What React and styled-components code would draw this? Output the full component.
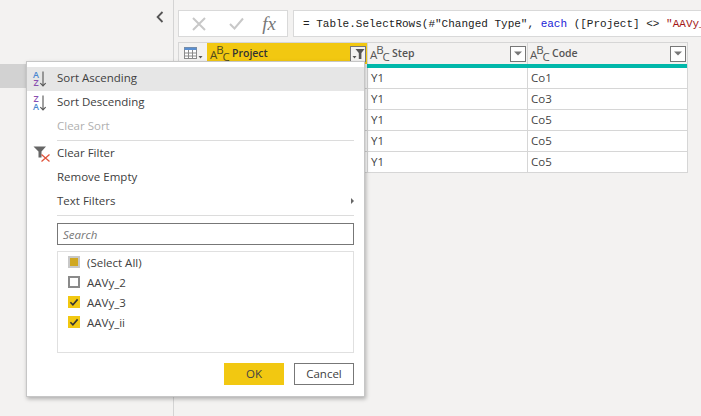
import styled, { createGlobalStyle } from "styled-components";

const GlobalStyle = createGlobalStyle`
  html, body {
    margin: 0;
    padding: 0;
    width: 701px;
    height: 416px;
    overflow: hidden;
    background: #f3f2f1;
    font-family: "Open Sans", "Liberation Sans", sans-serif;
  }
`;

const AbcIcon = ({ dark }) => (
  <AbcWrap $dark={dark}>
    <AbcLetter $drop={1}>A</AbcLetter>
    <AbcLetter $drop={-4}>B</AbcLetter>
    <AbcLetter $drop={3}>C</AbcLetter>
  </AbcWrap>
);

const ArrowDown = () => (
  <svg width="6" height="16" viewBox="0 0 6 16">
    <path d="M3 0.5V15M0.4 12L3 15L5.6 12" fill="none" stroke="#555" strokeWidth="1.1" />
  </svg>
);

const Check = () => (
  <svg width="12" height="12" viewBox="0 0 12 12">
    <path d="M2.4 6.2L4.9 8.8L9.6 3.4" fill="none" stroke="#333" strokeWidth="1.6" />
  </svg>
);

const App = () => {
  const rows = [
    ["Y1", "Co1"],
    ["Y1", "Co3"],
    ["Y1", "Co5"],
    ["Y1", "Co5"],
    ["Y1", "Co5"],
  ];

  return (
    <Page>
      <GlobalStyle />
      <SidePanel>
        <Collapse>
          <svg width="8" height="12" viewBox="0 0 8 12">
            <path d="M6.5 1L1.6 6L6.5 11" fill="none" stroke="#555" strokeWidth="1.8" />
          </svg>
        </Collapse>
        <SelectedQuery />
      </SidePanel>

      <Main>
        <FormulaRow>
          <FormulaTools>
            <svg width="14" height="14" viewBox="0 0 14 14">
              <path d="M1 1L13 13M13 1L1 13" stroke="#c8c8c8" strokeWidth="2" />
            </svg>
            <svg width="15" height="13" viewBox="0 0 15 13">
              <path d="M1 7L5.5 11.5L14 1.5" fill="none" stroke="#c8c8c8" strokeWidth="2" />
            </svg>
            <Fx>fx</Fx>
          </FormulaTools>
          <FormulaInput>
            = Table.SelectRows(#"Changed Type", <Keyword>each</Keyword> ([Project] &lt;&gt;{" "}
            <Str>"AAVy_</Str>
          </FormulaInput>
        </FormulaRow>

        <Table>
          <HeaderRow>
            <CornerCell>
              <svg width="19" height="13" viewBox="0 0 19 13">
                <rect x="0.5" y="0.5" width="12" height="11" fill="#fff" stroke="#8a8a8a" />
                <rect x="0.5" y="0.5" width="12" height="2.5" fill="#5b8fd0" />
                <path d="M4.5 3V11.5M8.5 3V11.5M0.5 6H12.5M0.5 9H12.5" stroke="#8a8a8a" strokeWidth="1" />
                <path d="M14.5 9H18.5L16.5 11.5Z" fill="#555" />
              </svg>
            </CornerCell>
            <HeaderCell $active>
              <AbcIcon dark />
              <HeaderLabel $active>Project</HeaderLabel>
              <FilterButton $active>
                <svg width="13" height="12" viewBox="0 0 13 12">
                  <path d="M3.5 1H12.5L9.4 5V11H6.8V5Z" fill="#555" />
                  <path d="M0.5 8H4.5L2.5 10.5Z" fill="#555" />
                </svg>
              </FilterButton>
            </HeaderCell>
            <HeaderCell>
              <AbcIcon />
              <HeaderLabel>Step</HeaderLabel>
              <FilterButton>
                <svg width="8" height="5" viewBox="0 0 8 5">
                  <path d="M0 0.5H8L4 4.5Z" fill="#777" />
                </svg>
              </FilterButton>
            </HeaderCell>
            <HeaderCell>
              <AbcIcon />
              <HeaderLabel>Code</HeaderLabel>
              <FilterButton>
                <svg width="8" height="5" viewBox="0 0 8 5">
                  <path d="M0 0.5H8L4 4.5Z" fill="#777" />
                </svg>
              </FilterButton>
            </HeaderCell>
          </HeaderRow>
          <QualityBar />
          {rows.map(([step, code], i) => (
            <DataRow key={i}>
              <DataCell />
              <DataCell />
              <DataCell>{step}</DataCell>
              <DataCell>{code}</DataCell>
            </DataRow>
          ))}
        </Table>
      </Main>

      <Menu>
        <MenuItem $hover>
          <MenuIcon>
            <SortLetters>
              <SortA>A</SortA>
              <SortZ>Z</SortZ>
            </SortLetters>
            <ArrowDown />
          </MenuIcon>
          Sort Ascending
        </MenuItem>
        <MenuItem>
          <MenuIcon>
            <SortLetters>
              <SortZ>Z</SortZ>
              <SortA>A</SortA>
            </SortLetters>
            <ArrowDown />
          </MenuIcon>
          Sort Descending
        </MenuItem>
        <MenuItem $disabled>
          <MenuIcon />
          Clear Sort
        </MenuItem>
        <Divider />
        <MenuItem>
          <MenuIcon>
            <svg width="18" height="16" viewBox="0 0 18 16">
              <path d="M0.5 0.5H13L8.5 5.5V11.5H5.5V5.5Z" fill="#666" />
              <path d="M8.5 8.5L16.5 15.5M16.5 8.5L8.5 15.5" stroke="#e0543c" strokeWidth="1.3" />
            </svg>
          </MenuIcon>
          Clear Filter
        </MenuItem>
        <MenuItem>
          <MenuIcon />
          Remove Empty
        </MenuItem>
        <MenuItem>
          <MenuIcon />
          Text Filters
          <Caret />
        </MenuItem>
        <Divider />
        <SearchBox>Search</SearchBox>
        <CheckList>
          <CheckRow>
            <CheckBox $state="mixed" />
            (Select All)
          </CheckRow>
          <CheckRow>
            <CheckBox $state="off" />
            AAVy_2
          </CheckRow>
          <CheckRow>
            <CheckBox $state="on">
              <Check />
            </CheckBox>
            AAVy_3
          </CheckRow>
          <CheckRow>
            <CheckBox $state="on">
              <Check />
            </CheckBox>
            AAVy_ii
          </CheckRow>
        </CheckList>
        <MenuButtons>
          <OkButton>OK</OkButton>
          <CancelButton>Cancel</CancelButton>
        </MenuButtons>
      </Menu>
    </Page>
  );
};

const Page = styled.div`
  position: relative;
  display: flex;
  width: 701px;
  height: 416px;
  overflow: hidden;
  background: #f3f2f1;
  color: #333;
  font-size: 11.5px;
`;

const SidePanel = styled.aside`
  width: 173px;
  height: 100%;
  flex: none;
  border-right: 1px solid #d4d4d4;
  box-sizing: content-box;
`;

const Collapse = styled.div`
  display: flex;
  justify-content: flex-end;
  height: 64px;
  padding: 11px 9px 0 0;
  box-sizing: border-box;
`;

const SelectedQuery = styled.div`
  height: 24px;
  background: #d2d2d2;
`;

const Main = styled.main`
  flex: 1;
  min-width: 0;
  padding: 10px 0 0 4px;
`;

const FormulaRow = styled.div`
  display: flex;
  gap: 5px;
  height: 27px;
  margin-bottom: 5px;
`;

const FormulaTools = styled.div`
  display: flex;
  align-items: center;
  justify-content: space-between;
  width: 110px;
  flex: none;
  box-sizing: border-box;
  padding: 0 11px 0 13px;
  background: #fff;
  border: 1px solid #d9d9d9;

  svg:nth-child(2) {
    margin-left: 5px;
  }
`;

const Fx = styled.span`
  font-family: "Liberation Serif", serif;
  font-style: italic;
  font-size: 19px;
  line-height: 22px;
  color: #777;
`;

const FormulaInput = styled.div`
  flex: 1;
  min-width: 0;
  box-sizing: border-box;
  padding: 0 0 0 9px;
  margin-right: -2px;
  background: #fff;
  border: 1px solid #d9d9d9;
  border-right: 0;
  font-family: "Liberation Mono", monospace;
  font-size: 11px;
  line-height: 27px;
  color: #222;
  white-space: pre;
  overflow: hidden;
`;

const Keyword = styled.span`
  color: #1a1ad6;
`;

const Str = styled.span`
  color: #a31515;
`;

const Table = styled.div`
  width: 510px;
  box-sizing: border-box;
  border: 1px solid #d6d6d6;
  border-bottom: 0;
`;

const HeaderRow = styled.div`
  display: grid;
  grid-template-columns: 28px 160px 160px 160px;
  height: 21px;
`;

const CornerCell = styled.div`
  display: flex;
  align-items: center;
  padding-left: 5px;
  background: #f3f2f1;
`;

const HeaderCell = styled.div`
  display: flex;
  align-items: center;
  padding: 0 1px 0 2px;
  background: ${({ $active }) => ($active ? "#f2c811" : "#f3f2f1")};
  border-left: 1px solid ${({ $active }) => ($active ? "#f2c811" : "#d6d6d6")};
`;

const AbcWrap = styled.span`
  display: flex;
  align-items: center;
  width: 20px;
  flex: none;
  color: ${({ $dark }) => ($dark ? "#4f4a1e" : "#555")};
`;

const AbcLetter = styled.span`
  font-size: 11.5px;
  line-height: 12px;
  width: 6.3px;
  transform: translateY(${({ $drop }) => $drop}px);
`;

const HeaderLabel = styled.span`
  flex: 1;
  margin-left: 2px;
  margin-top: -1px;
  font-size: 10.5px;
  font-weight: 600;
  color: ${({ $active }) => ($active ? "#333" : "#555")};
`;

const FilterButton = styled.span`
  display: flex;
  align-items: center;
  justify-content: center;
  width: 16px;
  height: 16px;
  flex: none;
  box-sizing: border-box;
  background: ${({ $active }) => ($active ? "#f3f2f1" : "#fff")};
  border: 1px solid #777;
`;

const QualityBar = styled.div`
  height: 4px;
  margin-left: 188px;
  background: #01b8aa;
`;

const DataRow = styled.div`
  display: grid;
  grid-template-columns: 28px 160px 160px 160px;
  height: 21px;
  background: #fff;
`;

const DataCell = styled.div`
  box-sizing: border-box;
  padding-left: 3px;
  border-left: 1px solid #d6d6d6;
  border-bottom: 1px solid #d6d6d6;
  font-size: 11.5px;
  line-height: 20px;
  color: #444;
`;

const Menu = styled.div`
  position: absolute;
  left: 26px;
  top: 61px;
  width: 339px;
  height: 336px;
  box-sizing: border-box;
  padding-top: 5px;
  background: #fff;
  border: 1px solid #c6c6c6;
  box-shadow: 1px 2px 4px rgba(0, 0, 0, 0.28);
`;

const MenuItem = styled.div`
  display: flex;
  align-items: center;
  height: 24px;
  box-sizing: border-box;
  padding: 0 10px 3px 0;
  background: ${({ $hover }) => ($hover ? "#e6e6e6" : "transparent")};
  color: ${({ $disabled }) => ($disabled ? "#b0b0b0" : "#404040")};
`;

const MenuIcon = styled.span`
  display: flex;
  align-items: center;
  gap: 1px;
  width: 30px;
  height: 21px;
  flex: none;
  padding: 3px 0 0 6px;
  box-sizing: border-box;
`;

const SortLetters = styled.span`
  display: flex;
  flex-direction: column;
  align-items: center;
  font-size: 9px;
  line-height: 8px;
  font-weight: 600;
`;

const SortA = styled.span`
  color: #4a86d0;
`;

const SortZ = styled.span`
  color: #8a4fb0;
`;

const Caret = styled.span`
  margin-left: auto;
  border-left: 3px solid #666;
  border-top: 3px solid transparent;
  border-bottom: 3px solid transparent;
`;

const Divider = styled.div`
  height: 1px;
  margin: 1px 10px 1px 30px;
  background: #dcdcdc;
`;

const SearchBox = styled.div`
  height: 22px;
  margin: 7px 10px 6px 30px;
  box-sizing: border-box;
  padding-left: 5px;
  border: 1px solid #777;
  font-style: italic;
  line-height: 21px;
  color: #777;
`;

const CheckList = styled.div`
  height: 102px;
  margin: 0 10px 0 30px;
  box-sizing: border-box;
  border: 1px solid #e0e0e0;
`;

const CheckRow = styled.div`
  display: flex;
  align-items: center;
  gap: 7px;
  height: 20px;
  padding-left: 10px;
  color: #404040;
`;

const checkColours = {
  mixed: "background: #d0a822; border: 2px solid #c8c8c8;",
  off: "background: #fff; border: 2px solid #8a8a8a;",
  on: "background: #f2c811; border: 0;",
};

const CheckBox = styled.span`
  display: flex;
  align-items: center;
  justify-content: center;
  width: 12px;
  height: 12px;
  flex: none;
  box-sizing: border-box;
  ${({ $state }) => checkColours[$state]}
`;

const MenuButtons = styled.div`
  display: flex;
  justify-content: flex-end;
  gap: 10px;
  margin: 10px 10px 0 0;
`;

const OkButton = styled.div`
  width: 60px;
  height: 22px;
  background: #f2c811;
  text-align: center;
  line-height: 22px;
  color: #444;
`;

const CancelButton = styled.div`
  width: 60px;
  height: 22px;
  box-sizing: border-box;
  background: #fff;
  border: 1px solid #777;
  text-align: center;
  line-height: 20px;
  color: #404040;
`;

export default App;
